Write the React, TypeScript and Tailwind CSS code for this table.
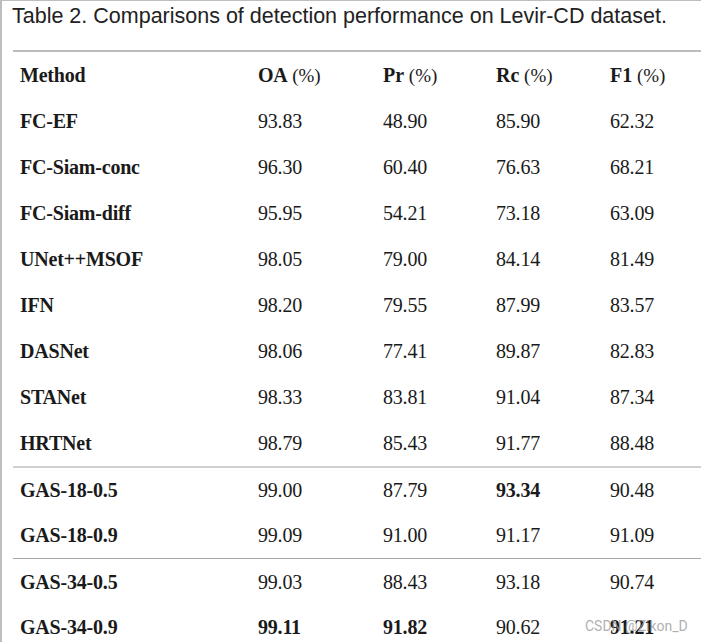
const rows: [string, string, string, string, string, string[]][] = [
  ["FC-EF", "93.83", "48.90", "85.90", "62.32", []],
  ["FC-Siam-conc", "96.30", "60.40", "76.63", "68.21", []],
  ["FC-Siam-diff", "95.95", "54.21", "73.18", "63.09", []],
  ["UNet++MSOF", "98.05", "79.00", "84.14", "81.49", []],
  ["IFN", "98.20", "79.55", "87.99", "83.57", []],
  ["DASNet", "98.06", "77.41", "89.87", "82.83", []],
  ["STANet", "98.33", "83.81", "91.04", "87.34", []],
  ["HRTNet", "98.79", "85.43", "91.77", "88.48", []],
  ["GAS-18-0.5", "99.00", "87.79", "93.34", "90.48", ["rc"]],
  ["GAS-18-0.9", "99.09", "91.00", "91.17", "91.09", []],
  ["GAS-34-0.5", "99.03", "88.43", "93.18", "90.74", []],
  ["GAS-34-0.9", "99.11", "91.82", "90.62", "91.21", ["oa", "pr", "f1"]],
]

const keys = ["oa", "pr", "rc", "f1"]

export default function App() {
  return (
    <div className="relative w-[701px] h-[642px] overflow-hidden bg-white border-l-2 border-t border-[#bdbdbd] text-[#1a1a1a] font-['Liberation_Serif',serif]">
      <p className="pl-[10px] pt-[2px] h-[49px] text-[21.5px] leading-[27px] font-['Liberation_Sans',sans-serif] text-[#222]">
        Table 2. Comparisons of detection performance on Levir-CD dataset.
      </p>
      <div className="ml-[11px] border-t-2 border-[#bcbcbc]">
        <div className="grid grid-cols-[238px_125px_113px_114px_1fr] h-[46px] items-center pl-[7px] text-[19px]">
          <span className="font-bold text-[20px] tracking-[-0.2px]">Method</span>
          <span><b className="text-[20px] tracking-[-0.3px]">OA</b> (%)</span>
          <span><b className="text-[20px]">Pr</b> (%)</span>
          <span><b className="text-[20px]">Rc</b> (%)</span>
          <span><b className="text-[20px]">F1</b> (%)</span>
        </div>
        {rows.map(([name, ...rest], i) => {
          const bold = rest[4] as string[]
          const vals = rest.slice(0, 4) as string[]
          let border = ""
          if (i === 8) border = "border-t-2 border-[#d0d0d0]"
          if (i === 10) border = "border-t border-[#a8a8a8]"
          return (
            <div
              key={name}
              className={`grid grid-cols-[238px_125px_113px_114px_1fr] h-[46px] items-center pl-[7px] ${border}`}
            >
              <span className="font-bold text-[20px] tracking-[-0.2px]">{name}</span>
              {vals.map((v, j) => (
                <span
                  key={j}
                  className={`text-[20px] tracking-[-0.2px] ${bold.includes(keys[j]) ? "font-bold" : ""}`}
                >
                  {v}
                </span>
              ))}
            </div>
          )
        })}
      </div>
      <span className="absolute left-[583px] top-[615px] text-[14px] text-[#9a9a9a]/80 font-['Roboto',sans-serif]">
        CSDN @Zikon_D
      </span>
    </div>
  )
}
